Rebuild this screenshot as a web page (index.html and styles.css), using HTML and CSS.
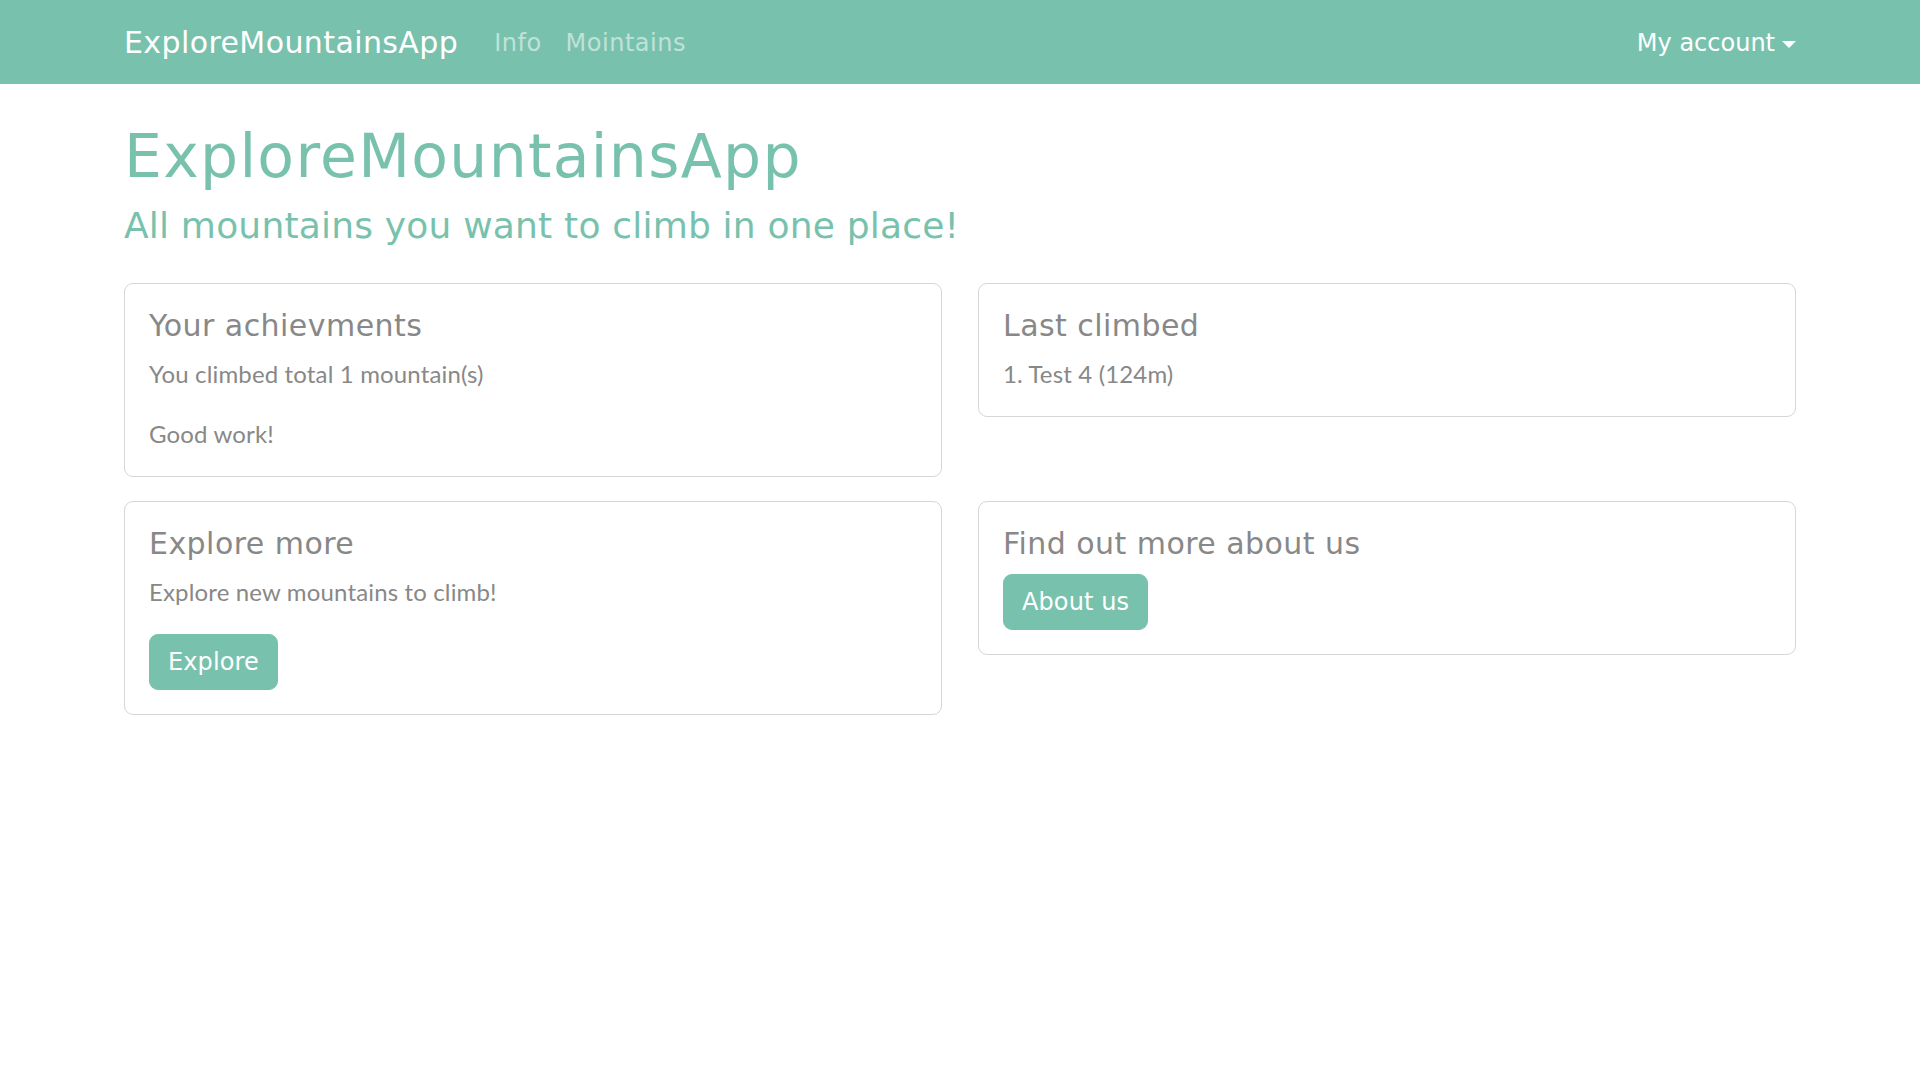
FILE: index.html
```html
<!DOCTYPE html>
<html lang="en">
<head>
<meta charset="utf-8">
<title>ExploreMountainsApp</title>
<link rel="stylesheet" href="styles.css">
</head>
<body>
<nav class="navbar">
  <div class="container nav-inner">
    <a class="brand" href="#">ExploreMountainsApp</a>
    <ul class="nav-links">
      <li><a class="nav-link" href="#">Info</a></li>
      <li><a class="nav-link" href="#">Mointains</a></li>
    </ul>
    <a class="account" href="#">My account<span class="caret"></span></a>
  </div>
</nav>
<main class="container">
  <h1 class="title">ExploreMountainsApp</h1>
  <h4 class="subtitle">All mountains you want to climb in one place!</h4>
  <div class="grid">
    <div class="card">
      <h5 class="card-title">Your achievments</h5>
      <p class="card-text">You climbed total 1 mountain(s)</p>
      <p class="card-text">Good work!</p>
    </div>
    <div class="card">
      <h5 class="card-title">Last climbed</h5>
      <p class="card-text">1. Test 4 (124m)</p>
    </div>
    <div class="card">
      <h5 class="card-title">Explore more</h5>
      <p class="card-text">Explore new mountains to climb!</p>
      <a class="btn" href="#">Explore</a>
    </div>
    <div class="card">
      <h5 class="card-title">Find out more about us</h5>
      <a class="btn" href="#">About us</a>
    </div>
  </div>
</main>
</body>
</html>
```
FILE: styles.css
```css
* { box-sizing: border-box; }
html, body { margin: 0; padding: 0; background: #fff; }
body {
  font-family: "Lato", "Open Sans", "Liberation Sans", sans-serif;
  font-size: 24px;
  line-height: 36px;
  letter-spacing: 0.15px;
  color: #888;
}
a { text-decoration: none; }
.container { width: 1672px; margin: 0 auto; }

.navbar { background: #78c2ad; height: 84px; }
.nav-inner { display: flex; align-items: center; height: 84px; }
.brand {
  font-family: "DejaVu Sans", sans-serif;
  font-size: 30px;
  line-height: 45px;
  letter-spacing: 0.4px;
  color: #fff;
  margin-right: 24px;
}
.nav-links { display: flex; list-style: none; margin: 0; padding: 0; }
.nav-link {
  display: block;
  padding: 0 12px;
  font-family: "DejaVu Sans", sans-serif;
  font-size: 24px;
  line-height: 36px;
  letter-spacing: 0.5px;
  color: rgba(255,255,255,0.55);
  margin-top: 2px;
}
.account {
  margin-left: auto;
  display: flex;
  align-items: center;
  font-family: "DejaVu Sans", sans-serif;
  font-size: 24px;
  line-height: 36px;
  letter-spacing: 0;
  color: #fff;
  margin-top: 2px;
}
.caret {
  display: inline-block;
  margin-left: 7px;
  width: 0; height: 0;
  border-top: 7px solid #fff;
  border-left: 7px solid transparent;
  border-right: 7px solid transparent;
  margin-top: 2px;
}

.title {
  margin: 36px 0 12px;
  font-family: "DejaVu Sans", sans-serif;
  font-weight: 400;
  font-size: 60px;
  line-height: 72px;
  letter-spacing: 1.3px;
  color: #78c2ad;
}
.subtitle {
  margin: 0;
  font-family: "DejaVu Sans", sans-serif;
  font-weight: 400;
  font-size: 36px;
  line-height: 43px;
  letter-spacing: 0.2px;
  color: #78c2ad;
}
.grid {
  margin-top: 36px;
  display: grid;
  grid-template-columns: 1fr 1fr;
  column-gap: 36px;
  row-gap: 24px;
  align-items: start;
}
.card {
  border: 1px solid #d6d6d6;
  border-radius: 9px;
  padding: 24px;
}
.card-title {
  margin: 0 0 12px;
  font-family: "DejaVu Sans", sans-serif;
  font-weight: 400;
  font-size: 30px;
  line-height: 36px;
  letter-spacing: 0.45px;
  color: #888;
}
.card-text { margin: 0 0 24px; }
.card-text:last-child { margin-bottom: 0; }
.btn {
  display: inline-block;
  background: #78c2ad;
  color: #fff;
  border: 1px solid #78c2ad;
  border-radius: 9px;
  padding: 9px 18px;
  font-family: "DejaVu Sans", sans-serif;
  font-size: 24px;
  line-height: 36px;
  letter-spacing: 0.1px;
}
```
